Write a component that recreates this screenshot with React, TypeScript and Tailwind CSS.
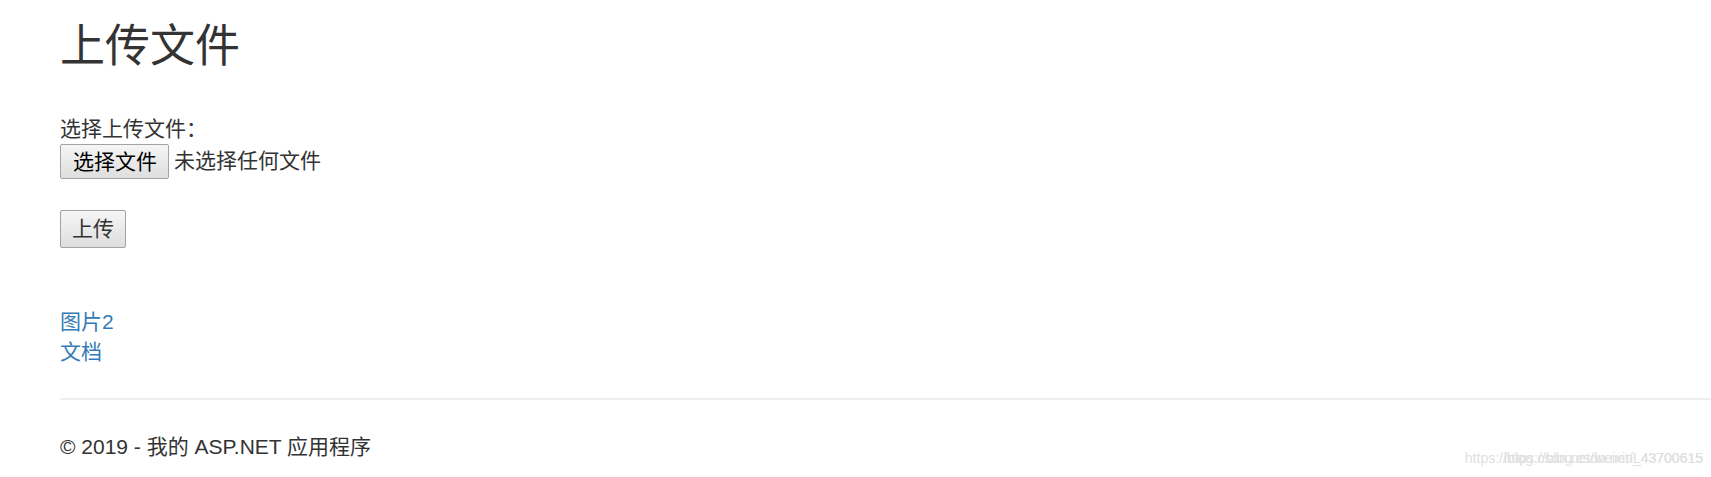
const font = "font-['Liberation_Sans','Noto_Sans_CJK_SC',sans-serif]";

function FileButton({ label }: { label: string }) {
  return (
    <button
      type="button"
      className="h-[35px] rounded-[2px] border border-[#a3a3a3] bg-gradient-to-b from-[#f6f6f6] to-[#dedede] pl-[12px] pr-[11px] text-[21px] leading-none text-black"
    >
      {label}
    </button>
  );
}

export default function App() {
  return (
    <div className={`relative h-[477px] w-[1711px] overflow-hidden bg-white text-[21px] leading-[30px] text-[#333] ${font}`}>
      <div className="pl-[60px] pt-[22px]">
        <h2 className="text-[45px] font-normal leading-[49.5px]">上传文件</h2>

        <form className="mt-[42px]">
          <div>选择上传文件：</div>
          <div className="flex items-center">
            <FileButton label="选择文件" />
            <span className="ml-[5px]">未选择任何文件</span>
          </div>
          <button
            type="submit"
            className="mt-[31px] h-[38px] w-[66px] rounded-[2px] border border-[#a3a3a3] bg-gradient-to-b from-[#f6f6f6] to-[#dedede] text-[21px] leading-none text-[#333]"
          >
            上传
          </button>
        </form>

        <div className="mt-[59px] flex flex-col">
          <a href="#" className="w-fit text-[#337ab7]">图片2</a>
          <a href="#" className="w-fit text-[#337ab7]">文档</a>
        </div>
      </div>

      <hr className="ml-[60px] mt-[31px] border-t-2 border-[#eee]" />

      <footer className="pl-[60px] pt-[32px]">
        <p>© 2019 - 我的 ASP.NET 应用程序</p>
      </footer>

      {/* watermark, two copies laid over each other */}
      <div className="absolute right-[8px] top-[449px] text-[14px] leading-[18px] text-[#e0e0e0]">
        <span className="absolute right-0 top-0 whitespace-nowrap">https://blog.csdn.net/L43700615</span>
        <span className="whitespace-nowrap">https://blog.csdn.net/weixin_43700615</span>
      </div>
    </div>
  );
}
